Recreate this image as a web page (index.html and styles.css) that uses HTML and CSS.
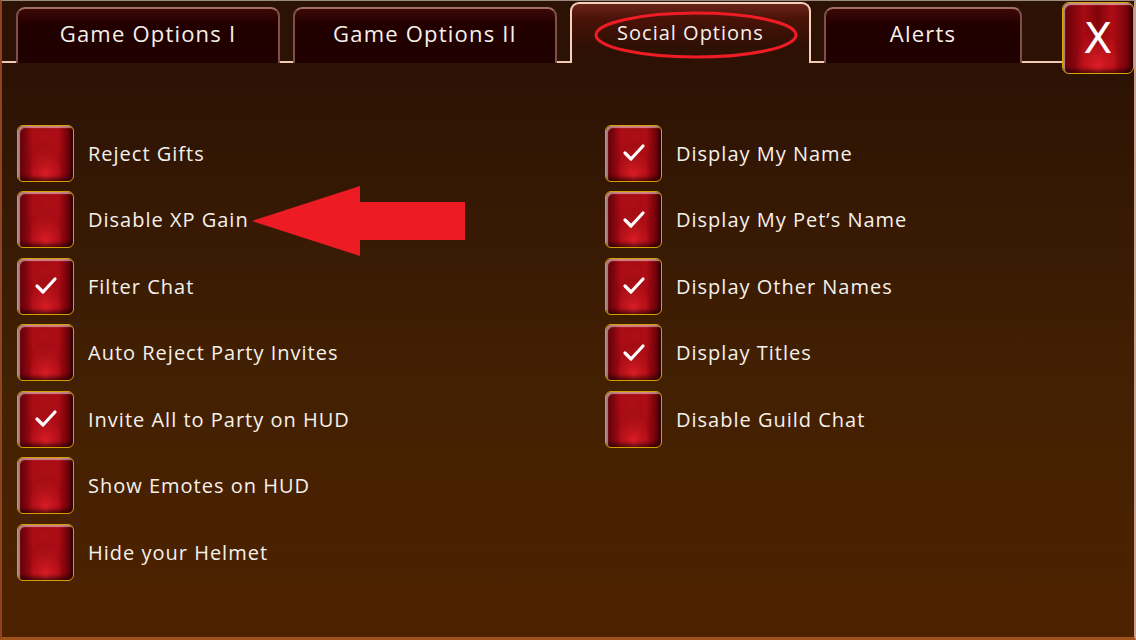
FILE: index.html
```html
<!DOCTYPE html>
<html>
	<head>
		<meta charset="UTF-8">
		<title>Social Options</title>
		<link rel="stylesheet" href="styles.css">
	</head>
	<body>
		<div id="panel">
			<div class="tabs">
				<div class="tab">Game Options I</div>
				<div class="tab">Game Options II</div>
				<div class="tab active">
					<span>Social Options</span>
					<svg class="ring" width="204" height="48" viewBox="0 0 204 48"><ellipse cx="102" cy="24" rx="100" ry="22" fill="none" stroke="#ee1c24" stroke-width="3"/></svg>
				</div>
				<div class="tab alerts">Alerts</div>
			</div>
			<div class="close">X</div>

			<div class="options">
				<div class="col">
					<div class="opt"><div class="box"></div><span>Reject Gifts</span></div>
					<div class="opt"><div class="box"></div><span>Disable XP Gain</span></div>
					<div class="opt"><div class="box on"><svg width="24" height="20" viewBox="0 0 24 20"><path d="M3 10 L9 16 L21 3" fill="none" stroke="#fff" stroke-width="3.2" stroke-linecap="round" stroke-linejoin="round"/></svg></div><span>Filter Chat</span></div>
					<div class="opt"><div class="box"></div><span>Auto Reject Party Invites</span></div>
					<div class="opt"><div class="box on"><svg width="24" height="20" viewBox="0 0 24 20"><path d="M3 10 L9 16 L21 3" fill="none" stroke="#fff" stroke-width="3.2" stroke-linecap="round" stroke-linejoin="round"/></svg></div><span>Invite All to Party on HUD</span></div>
					<div class="opt"><div class="box"></div><span>Show Emotes on HUD</span></div>
					<div class="opt"><div class="box"></div><span>Hide your Helmet</span></div>
				</div>
				<div class="col">
					<div class="opt"><div class="box on"><svg width="24" height="20" viewBox="0 0 24 20"><path d="M3 10 L9 16 L21 3" fill="none" stroke="#fff" stroke-width="3.2" stroke-linecap="round" stroke-linejoin="round"/></svg></div><span>Display My Name</span></div>
					<div class="opt"><div class="box on"><svg width="24" height="20" viewBox="0 0 24 20"><path d="M3 10 L9 16 L21 3" fill="none" stroke="#fff" stroke-width="3.2" stroke-linecap="round" stroke-linejoin="round"/></svg></div><span>Display My Pet’s Name</span></div>
					<div class="opt"><div class="box on"><svg width="24" height="20" viewBox="0 0 24 20"><path d="M3 10 L9 16 L21 3" fill="none" stroke="#fff" stroke-width="3.2" stroke-linecap="round" stroke-linejoin="round"/></svg></div><span>Display Other Names</span></div>
					<div class="opt"><div class="box on"><svg width="24" height="20" viewBox="0 0 24 20"><path d="M3 10 L9 16 L21 3" fill="none" stroke="#fff" stroke-width="3.2" stroke-linecap="round" stroke-linejoin="round"/></svg></div><span>Display Titles</span></div>
					<div class="opt"><div class="box"></div><span>Disable Guild Chat</span></div>
				</div>
			</div>

			<!-- annotation arrow -->
			<svg class="arrow" width="216" height="72" viewBox="0 0 216 72"><polygon points="0,35 108,0 108,16 213,16 213,54 108,54 108,70" fill="#ed1c24"/></svg>
		</div>
	</body>
</html>
```

FILE: styles.css
```css
*{
	margin: 0;
	padding: 0;
	box-sizing: border-box;
}
body{
	background: #2c1204;
	font-family: "Open Sans", "Noto Sans", sans-serif;
	color: #f6f1ea;
}
#panel{
	position: relative;
	width: 1136px;
	height: 640px;
	overflow: hidden;
	background: linear-gradient(#2c1204 0px, #2c1204 63px, #321604 150px, #422002 380px, #4e2200 640px);
	border-left: 2px solid #8e4420;
	border-right: 2px solid #c8a090;
	border-top: 1px solid #9a8a80;
	border-bottom: 3px solid #a0521c;
}
.tabs{
	display: flex;
	align-items: flex-end;
	gap: 13px;
	height: 62px;
	padding-left: 14px;
	border-bottom: 2px solid #f2c8b0;
	width: 1070px;
}
.tab{
	flex-shrink: 0;
	width: 264px;
	height: 56px;
	margin-bottom: -2px;
	border: 2px solid #7e5048;
	border-top-color: #a07068;
	border-radius: 9px 9px 0 0;
	border-bottom: none;
	background: linear-gradient(#3c0806, #220000 30%, #200000);
	font-size: 22px;
	display: flex;
	align-items: center;
	justify-content: center;
	letter-spacing: 1.2px;
	padding-bottom: 6px;
}
.tab.active{
	position: relative;
	width: 241px;
	height: 61px;
	margin-bottom: -2px;
	border: 2px solid #f5d2bc;
	border-bottom: none;
	background: linear-gradient(#6a2418, #4a1208 25%, #301004 70%, #2c1204);
	font-size: 20px;
	letter-spacing: 1px;
	padding-bottom: 2px;
}
.tab.active .ring{
	position: absolute;
	left: 22px;
	top: 7px;
}
.tab.alerts{
	width: 198px;
}
.close{
	position: absolute;
	left: 1060px;
	top: 1px;
	width: 72px;
	height: 72px;
	border: 1px solid #d8a400;
	border-radius: 7px;
	background: radial-gradient(ellipse at 50% 95%, #e8202a 0%, rgba(232,32,42,0) 45%), linear-gradient(90deg, #600008, #a80a12 30%, #80040a 50%, #b00c14 70%, #600008);
	box-shadow: inset 2px 2px 1px rgba(255,255,255,0.55), inset -2px -3px 4px rgba(0,0,0,0.6);
	font-family: "DejaVu Sans", sans-serif;
	font-size: 42px;
	color: #fff;
	display: flex;
	align-items: center;
	justify-content: center;
}
.options{
	display: flex;
	padding: 62px 0 0 15px;
}
.col{
	flex-shrink: 0;
	width: 588px;
	display: flex;
	flex-direction: column;
	gap: 10.5px;
}
.col + .col{
	width: 500px;
}
.opt{
	display: flex;
	align-items: center;
	height: 56px;
	font-size: 20px;
	letter-spacing: 1px;
}
.box{
	width: 57px;
	height: 57px;
	margin-right: 14px;
	border: 1px solid #d4a000;
	border-radius: 6px;
	background: radial-gradient(ellipse at 50% 95%, #e8202a 0%, rgba(232,32,42,0) 45%), radial-gradient(ellipse at 50% 20%, rgba(200,20,30,0.7) 0%, rgba(200,20,30,0) 50%), linear-gradient(90deg, #5a0008, #a40a12 28%, #7a0408 50%, #a80a12 72%, #5a0008);
	box-shadow: inset 2px 2px 1px rgba(255,255,255,0.5), inset -2px -3px 4px rgba(0,0,0,0.6);
	display: flex;
	align-items: center;
	justify-content: center;
}
.arrow{
	position: absolute;
	left: 250px;
	top: 185px;
}
```
